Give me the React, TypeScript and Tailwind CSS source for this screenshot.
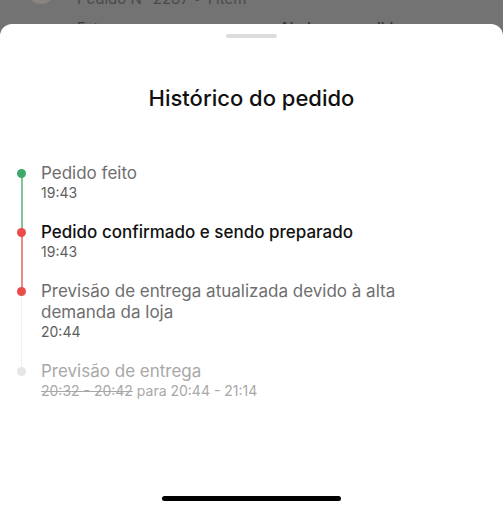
import React from "react";

const font = { fontFamily: "Inter, 'Noto Sans', sans-serif" };

type Item = {
  title: React.ReactNode;
  time: React.ReactNode;
  dot: string;
  line?: "green" | "red" | "dotted";
  titleClass: string;
  timeClass: string;
};

const items: Item[] = [
  {
    title: "Pedido feito",
    time: "19:43",
    dot: "bg-[#3fa86b]",
    line: "green",
    titleClass: "text-[#6e6e6e]",
    timeClass: "text-[#5e5e5e]",
  },
  {
    title: "Pedido confirmado e sendo preparado",
    time: "19:43",
    dot: "bg-[#ea4c4c]",
    line: "red",
    titleClass: "text-[#111111] font-medium",
    timeClass: "text-[#5e5e5e]",
  },
  {
    title: "Previsão de entrega atualizada devido à alta demanda da loja",
    time: "20:44",
    dot: "bg-[#ea4c4c]",
    line: "dotted",
    titleClass: "text-[#6e6e6e]",
    timeClass: "text-[#5e5e5e]",
  },
  {
    title: "Previsão de entrega",
    time: (
      <>
        <span className="line-through">20:32 - 20:42</span> para 20:44 - 21:14
      </>
    ),
    dot: "bg-[#e6e6e6]",
    titleClass: "text-[#a8a8a8]",
    timeClass: "text-[#a8a8a8]",
  },
];

export default function App() {
  return (
    <div className="w-[503px] h-[512px] overflow-hidden bg-[#737373] flex flex-col" style={font}>
      <div className="h-[24px] overflow-hidden shrink-0">
        <div className="flex items-start gap-[22px] pl-[27px] -mt-[13px]">
          <div className="w-[28px] h-[28px] mt-[-11px] rounded-full bg-[#8a8480]" />
          <div className="flex flex-col">
            <span className="text-[15px] leading-[24px] text-[#4a4a4a]">Pedido N° 2287 • 1 item</span>
            <div className="flex gap-[143px] mt-[8px] text-[14px] leading-[18px] text-[#3a3a3a]">
              <span>Entregue</span>
              <span className="font-semibold">Ajuda com pedido</span>
            </div>
          </div>
        </div>
      </div>
      <div className="flex-1 bg-white rounded-t-[12px] flex flex-col pt-[10px]">
        <div className="mx-auto w-[51px] h-[4px] rounded-full bg-[#dcdcdc]" />
        <h1 className="mt-[46px] text-center text-[22px] leading-[28px] font-medium text-[#111111]">
          Histórico do pedido
        </h1>
        <div className="mt-[51px] flex flex-col pl-[17px] pr-[16px]">
          {items.map((it, i) => (
            <div key={i} className="flex">
              <div className="relative w-[9px] shrink-0">
                {it.line === "green" && (
                  <div className="absolute left-[4px] top-[10px] bottom-[-10px] w-[1.5px] bg-[#80c49a]" />
                )}
                {it.line === "red" && (
                  <div className="absolute left-[4px] top-[10px] bottom-[-10px] w-[1.5px] bg-[#ec8a8a]" />
                )}
                {it.line === "dotted" && (
                  <div className="absolute left-[4px] top-[10px] bottom-[-10px] border-l-[1.5px] border-dotted border-[#e3e3e3]" />
                )}
                <div className={`absolute left-0 top-[6px] w-[9px] h-[9px] rounded-full ${it.dot}`} />
              </div>
              <div className="ml-[15px] pb-[20px] flex flex-col max-w-[400px]">
                <div className={`text-[17px] leading-[21px] ${it.titleClass}`}>{it.title}</div>
                <div className={`text-[14px] leading-[18px] ${it.timeClass}`}>{it.time}</div>
              </div>
            </div>
          ))}
        </div>
        <div className="mt-auto mb-[11px] mx-auto w-[179px] h-[5px] rounded-full bg-black" />
      </div>
    </div>
  );
}
